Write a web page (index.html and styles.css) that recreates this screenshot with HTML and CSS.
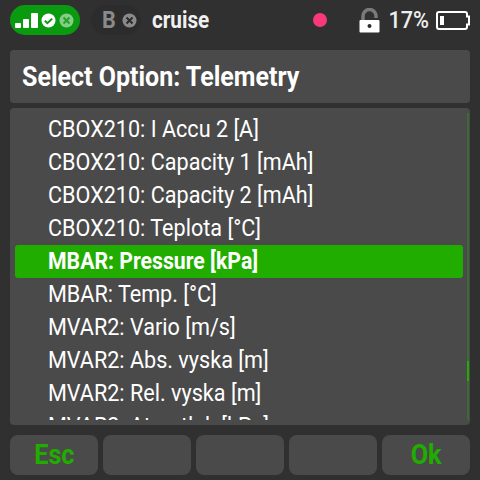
FILE: index.html
```html
<!DOCTYPE html>
<html lang="en">
<head>
    <meta charset="UTF-8">
    <title>Select Option: Telemetry</title>
    <link rel="stylesheet" href="styles.css">
</head>
<body>
    <div class="topbar">
        <div class="rx-pill">
            <svg class="bars" width="23" height="15" viewBox="0 0 23 15">
                <rect x="0" y="10" width="6" height="5" rx="1" fill="#fff"/>
                <rect x="8" y="6" width="6" height="9" rx="1" fill="#fff"/>
                <rect x="16" y="0" width="7" height="15" rx="1" fill="#fff"/>
            </svg>
            <svg class="dot" width="15" height="15" viewBox="0 0 15 15">
                <circle cx="7.5" cy="7.5" r="7" fill="#fff"/>
                <path d="M3.8 7.6l2.6 2.6 4.8-4.6" fill="none" stroke="#0a9a10" stroke-width="2"/>
            </svg>
            <svg class="dot" width="15" height="15" viewBox="0 0 15 15">
                <circle cx="7.5" cy="7.5" r="7" fill="#fff" fill-opacity=".5"/>
                <path d="M4.5 4.5l6 6M10.5 4.5l-6 6" fill="none" stroke="#0a9a10" stroke-width="2" stroke-opacity=".8"/>
            </svg>
        </div>
        <div class="rx-off">
            <span class="rx-letter narrow">B</span>
            <svg width="15" height="15" viewBox="0 0 15 15">
                <circle cx="7.5" cy="7.5" r="7" fill="#8a8a8a"/>
                <path d="M4.5 4.5l6 6M10.5 4.5l-6 6" fill="none" stroke="#2b2b2b" stroke-width="2"/>
            </svg>
        </div>
        <span class="model narrow">cruise</span>
        <span class="rec"></span>
        <svg class="lock" width="21" height="25" viewBox="0 0 21 25">
            <path d="M4 12V8a6.500 6.500 0 0 1 13 0V10" fill="none" stroke="#7a7a7a" stroke-width="3.500"/>
            <path d="M1.500 12h18a1 1 0 0 1 1 1v10.500a1 1 0 0 1-1 1h-18a1 1 0 0 1-1-1V13a1 1 0 0 1 1-1z" fill="#fff"/>
            <circle cx="10.500" cy="18" r="2" fill="#2b2b2b"/>
        </svg>
        <span class="percent narrow">17%</span>
        <svg class="battery" width="34" height="19" viewBox="0 0 34 19">
            <path d="M3 1h26a2 2 0 0 1 2 2v2.500h2v8h-2V16a2 2 0 0 1-2 2H3a2 2 0 0 1-2-2V3a2 2 0 0 1 2-2z" fill="none" stroke="#fff" stroke-width="2"/>
            <rect x="4" y="5" width="4" height="9" fill="#fff"/>
        </svg>
    </div>

    <div class="title"><span class="narrow">Select Option: Telemetry</span></div>

    <div class="list">
        <div class="rows">
            <div class="row"><span class="narrow">CBOX210: I Accu 2 [A]</span></div>
            <div class="row"><span class="narrow">CBOX210: Capacity 1 [mAh]</span></div>
            <div class="row"><span class="narrow">CBOX210: Capacity 2 [mAh]</span></div>
            <div class="row"><span class="narrow">CBOX210: Teplota [°C]</span></div>
            <div class="row selected"><span class="narrow">MBAR: Pressure [kPa]</span></div>
            <div class="row"><span class="narrow">MBAR: Temp. [°C]</span></div>
            <div class="row"><span class="narrow">MVAR2: Vario [m/s]</span></div>
            <div class="row"><span class="narrow">MVAR2: Abs. vyska [m]</span></div>
            <div class="row"><span class="narrow">MVAR2: Rel. vyska [m]</span></div>
            <div class="row"><span class="narrow">MVAR2: Atm. tlak [kPa]</span></div>
        </div>
        <div class="scrollbar"><div class="thumb"></div></div>
    </div>

    <div class="buttons">
        <div class="btn"><span class="narrow">Esc</span></div>
        <div class="btn"></div>
        <div class="btn"></div>
        <div class="btn"></div>
        <div class="btn"><span class="narrow">Ok</span></div>
    </div>
</body>
</html>
```
FILE: styles.css
```css
* {
    box-sizing: border-box;
}
html, body {
    height: 100%;
}
body {
    margin: 0;
    background: #303030;
    color: #fff;
    font-family: Roboto, sans-serif;
    display: flex;
    flex-direction: column;
    overflow: hidden;
}
/* the device font is a condensed Roboto */
.narrow {
    display: inline-block;
    transform: scaleX(.9);
    transform-origin: left center;
}
.topbar {
    height: 40px;
    margin-bottom: 10px;
    flex: none;
    display: flex;
    align-items: center;
    padding: 0 10px;
}
.rx-pill {
    width: 70px;
    height: 30px;
    border-radius: 15px;
    background: #0a9a10;
    display: flex;
    align-items: center;
    padding-left: 5px;
    gap: 3px;
}
.rx-off {
    width: 50px;
    height: 30px;
    margin-left: 11px;
    border-radius: 15px;
    background: #2c2c2c;
    display: flex;
    align-items: center;
    gap: 5px;
    padding-left: 11px;
    color: #8a8a8a;
    font-size: 24px;
    font-weight: 700;
}
.model {
    margin-left: 11px;
    font-size: 23px;
    font-weight: 700;
    color: #f0f0f0;
}
.rec {
    width: 14px;
    height: 14px;
    margin-left: auto;
    border-radius: 50%;
    background: #f9387c;
}
.lock {
    margin-left: 32px;
}
.percent {
    margin-left: 4px;
    font-size: 24px;
    font-weight: 500;
    color: #eee;
    transform-origin: right center;
}
.battery {
    margin-left: 7px;
}
.title {
    height: 53px;
    flex: none;
    margin: 0 10px;
    padding-left: 12px;
    border-radius: 4px;
    background: #4a4a4a;
    font-size: 28px;
    font-weight: 700;
    line-height: 53px;
}
.title .narrow {
    transform: scaleX(.893);
}
.list {
    position: relative;
    height: 317px;
    flex: none;
    margin: 5px 10px 0;
    padding: 5px 7px 5px 5px;
    border-radius: 4px;
    background: #4a4a4a;
}
.rows {
    height: 100%;
    overflow: hidden;
}
.row {
    height: 33px;
    padding-left: 33px;
    border-radius: 3px;
    font-size: 24px;
    line-height: 33px;
    white-space: nowrap;
}
.row.selected {
    background: #20ad00;
    font-weight: 700;
}
.row.selected .narrow {
    transform: scaleX(.885);
}
.scrollbar {
    position: absolute;
    top: 5px;
    right: 1px;
    width: 2px;
    height: 307px;
    background: #3c6a35;
}
.thumb {
    margin-top: 248px;
    height: 20px;
    background: #20ad00;
}
.buttons {
    flex: none;
    display: flex;
    gap: 5px;
    margin: 10px 10px 0;
}
.btn {
    flex: 1;
    height: 40px;
    border-radius: 8px;
    background: #4a4a4a;
    color: #20ad00;
    font-size: 28px;
    font-weight: 700;
    line-height: 40px;
    text-align: center;
}
.btn .narrow {
    transform-origin: center;
}
```
